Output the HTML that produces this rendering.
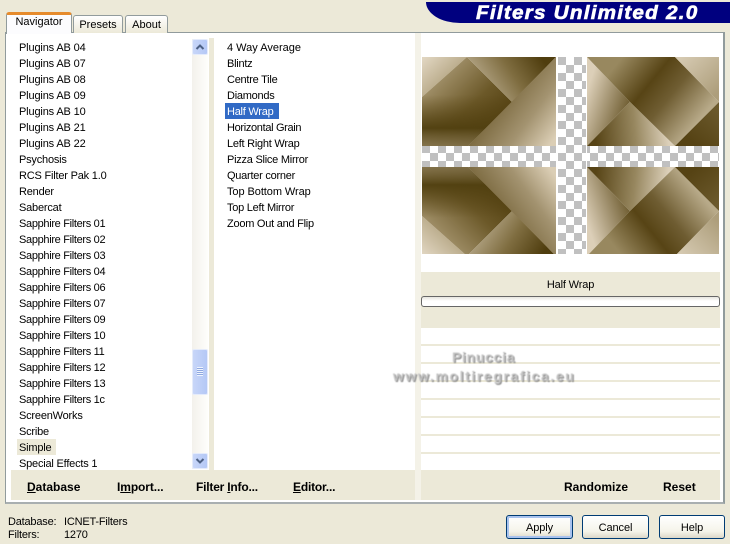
<!DOCTYPE html>
<html><head><meta charset="utf-8"><style>
html,body{margin:0;padding:0}
body{width:730px;height:540px;position:relative;overflow:hidden;background:#ece9d8;font:11px/16px "Liberation Sans",sans-serif;color:#000}
div,span.a{position:absolute;white-space:nowrap;box-sizing:border-box}
.r{left:19px;height:16px;line-height:18px;letter-spacing:-.2px}
.s{letter-spacing:-.32px}
.p{letter-spacing:-.15px}
.m{left:227px;height:16px;line-height:18px;letter-spacing:-.25px}
.b{font-weight:bold;font-size:12px;top:479px;letter-spacing:-.1px}
.btn{top:515px;height:24px;border:1px solid #003c74;border-radius:3px;background:linear-gradient(#fff,#f5f4ea 70%,#dcd8c8);text-align:center;font-size:11px;line-height:24px;letter-spacing:-.1px}
.sb{left:192px;width:16px;height:16px;background:linear-gradient(90deg,#c8d6f8,#b4c8f6);border:1px solid #e4ebfb;border-radius:2px}
.ln{left:421px;width:299px;height:2px;background:#ece9d8}
.st{letter-spacing:-.2px;line-height:18px}
.wm{font:bold 14px/16px "Liberation Sans",sans-serif;color:#c4c4c4;text-shadow:1px 1px 0 #8a8a8a;filter:blur(.45px)}
</style></head><body>
<div style="left:426px;top:2px;width:304px;height:21px;background:#00007f;border-bottom-left-radius:34px 21px"></div>
<div style="left:476px;top:2px;font:italic bold 19px/24px 'Liberation Sans',sans-serif;color:#fff;-webkit-text-stroke:.6px #fff;letter-spacing:1.12px;transform:scaleX(1.09);transform-origin:0 0">Filters Unlimited 2.0</div>

<div style="left:5px;top:32px;width:720px;height:472px;background:#fff;border:1px solid #919b9c;border-right-width:2px;border-bottom-width:2px;border-right-color:#919b9c;border-bottom-color:#a9afb0"></div>

<div style="left:73px;top:15px;width:50px;height:18px;background:linear-gradient(#fff,#ece9d8);border:1px solid #919b9c;border-bottom:0;border-radius:3px 3px 0 0;text-align:center;line-height:18px;font-size:11px">Presets</div>
<div style="left:125px;top:15px;width:43px;height:18px;background:linear-gradient(#fff,#ece9d8);border:1px solid #919b9c;border-bottom:0;border-radius:3px 3px 0 0;text-align:center;line-height:18px;font-size:11px">About</div>
<div style="left:6px;top:12px;width:66px;height:22px;background:#fcfcfe;border:1px solid #919b9c;border-top:3px solid #e68b2c;border-bottom:0;border-radius:3px 3px 0 0;text-align:center;line-height:15px;font-size:11px">Navigator</div>
<div style="left:7px;top:33px;width:65px;height:1px;background:#fcfcfe"></div>

<div style="left:209px;top:38px;width:5px;height:432px;background:#ece9d8"></div>
<div style="left:415px;top:33px;width:6px;height:437px;background:#f4f2e8"></div>
<div style="left:192px;top:39px;width:16px;height:430px;background:linear-gradient(90deg,#f3f1ec,#fefefb)"></div>

<div class="r p" style="top:39px">Plugins AB 04</div>
<div class="r p" style="top:55px">Plugins AB 07</div>
<div class="r p" style="top:71px">Plugins AB 08</div>
<div class="r p" style="top:87px">Plugins AB 09</div>
<div class="r p" style="top:103px">Plugins AB 10</div>
<div class="r p" style="top:119px">Plugins AB 21</div>
<div class="r p" style="top:135px">Plugins AB 22</div>
<div class="r" style="top:151px">Psychosis</div>
<div class="r" style="top:167px">RCS Filter Pak 1.0</div>
<div class="r" style="top:183px">Render</div>
<div class="r" style="top:199px">Sabercat</div>
<div class="r s" style="top:215px">Sapphire Filters 01</div>
<div class="r s" style="top:231px">Sapphire Filters 02</div>
<div class="r s" style="top:247px">Sapphire Filters 03</div>
<div class="r s" style="top:263px">Sapphire Filters 04</div>
<div class="r s" style="top:279px">Sapphire Filters 06</div>
<div class="r s" style="top:295px">Sapphire Filters 07</div>
<div class="r s" style="top:311px">Sapphire Filters 09</div>
<div class="r s" style="top:327px">Sapphire Filters 10</div>
<div class="r s" style="top:343px">Sapphire Filters 11</div>
<div class="r s" style="top:359px">Sapphire Filters 12</div>
<div class="r s" style="top:375px">Sapphire Filters 13</div>
<div class="r s" style="top:391px">Sapphire Filters 1c</div>
<div class="r" style="top:407px">ScreenWorks</div>
<div class="r" style="top:423px">Scribe</div>
<div style="left:17px;top:439px;width:39px;height:16px;background:#ece9d8"></div>
<div class="r" style="top:439px">Simple</div>
<div class="r" style="top:455px">Special Effects 1</div>

<div class="sb" style="top:39px"></div>
<svg style="position:absolute;left:192px;top:39px" width="16" height="16"><path d="M4.5 10 8 6.5 11.500 10" fill="none" stroke="#4d6185" stroke-width="2"/></svg>
<div class="sb" style="top:349px;height:46px"></div>
<div style="left:197px;top:367px;width:6px;height:9px;background:repeating-linear-gradient(#eef4fe 0 1px,#8fa8e0 1px 2px)"></div>
<div class="sb" style="top:453px"></div>
<svg style="position:absolute;left:192px;top:453px" width="16" height="16"><path d="M4.500 6 8 9.500 11.500 6" fill="none" stroke="#4d6185" stroke-width="2"/></svg>

<div class="m" style="top:39px;letter-spacing:0">4 Way Average</div>
<div class="m" style="top:55px">Blintz</div>
<div class="m" style="top:71px">Centre Tile</div>
<div class="m" style="top:87px">Diamonds</div>
<div style="left:225px;top:103px;width:54px;height:16px;background:#316ac5"></div>
<div class="m" style="top:103px;color:#fff">Half Wrap</div>
<div class="m" style="top:119px;letter-spacing:-.33px">Horizontal Grain</div>
<div class="m" style="top:135px">Left Right Wrap</div>
<div class="m" style="top:151px">Pizza Slice Mirror</div>
<div class="m" style="top:167px">Quarter corner</div>
<div class="m" style="top:183px;letter-spacing:-.07px">Top Bottom Wrap</div>
<div class="m" style="top:199px">Top Left Mirror</div>
<div class="m" style="top:215px">Zoom Out and Flip</div>

<svg style="position:absolute;left:422px;top:57px" width="297" height="197" viewBox="422 57 297 197">
<defs>
<pattern id="ck" x="558" y="57" width="16" height="16" patternUnits="userSpaceOnUse"><rect x="0" y="0" width="16" height="16" fill="#fff"/><rect x="0" y="0" width="8" height="8" fill="#c0c0c0"/><rect x="8" y="8" width="8" height="8" fill="#c0c0c0"/></pattern>
<linearGradient id="a1" gradientUnits="userSpaceOnUse" x1="422" y1="60" x2="445" y2="85"><stop offset="0" stop-color="#e0d5c0"/><stop offset="1" stop-color="#b5a684"/></linearGradient>
<linearGradient id="a2" gradientUnits="userSpaceOnUse" x1="445" y1="72" x2="495" y2="122"><stop offset="0" stop-color="#a08f68"/><stop offset=".6" stop-color="#6c5929"/><stop offset="1" stop-color="#564313"/></linearGradient>
<linearGradient id="a2b" gradientUnits="userSpaceOnUse" x1="450" y1="95" x2="450" y2="146"><stop offset="0" stop-color="#5a4716" stop-opacity="0"/><stop offset=".65" stop-color="#514010" stop-opacity=".95"/><stop offset="1" stop-color="#8a7a55" stop-opacity=".75"/></linearGradient>
<linearGradient id="a3" gradientUnits="userSpaceOnUse" x1="480" y1="85" x2="535" y2="48"><stop offset="0" stop-color="#b5a788"/><stop offset=".5" stop-color="#7f6d40"/><stop offset="1" stop-color="#4f3d0e"/></linearGradient>
<linearGradient id="a4" gradientUnits="userSpaceOnUse" x1="495" y1="100" x2="552" y2="142"><stop offset="0" stop-color="#77653a"/><stop offset=".55" stop-color="#a39370"/><stop offset="1" stop-color="#dbceb5"/></linearGradient>
<linearGradient id="b1" gradientUnits="userSpaceOnUse" x1="587" y1="90" x2="630" y2="105"><stop offset="0" stop-color="#dccfb8"/><stop offset="1" stop-color="#6e5c30"/></linearGradient>
<linearGradient id="b2" gradientUnits="userSpaceOnUse" x1="596" y1="142" x2="668" y2="135"><stop offset="0" stop-color="#574416"/><stop offset=".55" stop-color="#97875f"/><stop offset="1" stop-color="#dcd0ba"/></linearGradient>
<linearGradient id="b3" gradientUnits="userSpaceOnUse" x1="620" y1="60" x2="697" y2="123"><stop offset="0" stop-color="#98885f"/><stop offset=".38" stop-color="#574415"/><stop offset=".62" stop-color="#6f5d32"/><stop offset="1" stop-color="#b8aa89"/></linearGradient>
<linearGradient id="b4" gradientUnits="userSpaceOnUse" x1="680" y1="58" x2="715" y2="95"><stop offset="0" stop-color="#d6cab2"/><stop offset="1" stop-color="#ad9e7b"/></linearGradient>
<linearGradient id="b5" gradientUnits="userSpaceOnUse" x1="690" y1="140" x2="716" y2="108"><stop offset="0" stop-color="#564314"/><stop offset="1" stop-color="#6b592c"/></linearGradient>
<g id="q">
<polygon points="422,57 467,57 422,97" fill="url(#a1)"/>
<polygon points="467,57 512,102 468,146 422,146 422,97" fill="url(#a2)"/>
<polygon points="467,57 512,102 468,146 422,146 422,97" fill="url(#a2b)"/>
<polygon points="467,57 556,57 512,102" fill="url(#a3)"/>
<polygon points="556,57 556,146 468,146" fill="url(#a4)"/>
<polygon points="587,57 630,102 587,146" fill="url(#b1)"/>
<polygon points="630,102 587,146 675,146" fill="url(#b2)"/>
<polygon points="587,57 675,57 719,102 675,146 630,102" fill="url(#b3)"/>
<polygon points="675,57 719,57 719,102" fill="url(#b4)"/>
<polygon points="719,102 719,146 675,146" fill="url(#b5)"/>
</g>
</defs>
<rect x="422" y="57" width="297" height="197" fill="#fff"/>
<use href="#q"/>
<use href="#q" transform="matrix(1 0 0 -1 0 313)"/>
<rect x="422" y="146" width="297" height="21" fill="url(#ck)"/>
<rect x="556" y="57" width="31" height="197" fill="#fff"/>
<rect x="558" y="57" width="28" height="197" fill="url(#ck)"/>
</svg>

<div style="left:421px;top:272px;width:299px;height:56px;background:#ece9d8"></div>
<div style="left:421px;top:277px;width:299px;text-align:center;font-size:11px;letter-spacing:-.15px">Half Wrap</div>
<div style="left:421px;top:296px;width:299px;height:11px;background:linear-gradient(#e6e5de,#fff 45%);border:1px solid #666;border-radius:3px"></div>
<div class="ln" style="top:344px"></div>
<div class="ln" style="top:362px"></div>
<div class="ln" style="top:380px"></div>
<div class="ln" style="top:398px"></div>
<div class="ln" style="top:416px"></div>
<div class="ln" style="top:434px"></div>
<div class="ln" style="top:452px"></div>

<div class="wm" style="left:452px;top:349px;letter-spacing:.7px">Pinuccia</div>
<div class="wm" style="left:393px;top:368px;letter-spacing:1.6px">www.moltiregrafica.eu</div>

<div style="left:11px;top:470px;width:709px;height:30px;background:#ece9d8"></div>
<div style="left:415px;top:470px;width:6px;height:30px;background:#f4f2e8"></div>
<div class="b" style="left:27px;letter-spacing:0"><u>D</u>atabase</div>
<div class="b" style="left:117px">I<u>m</u>port...</div>
<div class="b" style="left:196px;letter-spacing:-.2px">Filter <u>I</u>nfo...</div>
<div class="b" style="left:293px;letter-spacing:-.2px"><u>E</u>ditor...</div>
<div class="b" style="left:564px;letter-spacing:0">Randomize</div>
<div class="b" style="left:663px;letter-spacing:0">Reset</div>

<div class="st" style="left:8px;top:513px">Database:</div>
<div class="st" style="left:64px;top:513px">ICNET-Filters</div>
<div class="st" style="left:8px;top:526px">Filters:</div>
<div class="st" style="left:64px;top:526px">1270</div>

<div class="btn" style="left:506px;width:67px;box-shadow:inset 0 0 0 2px #a9c3ee">Apply</div>
<div class="btn" style="left:582px;width:67px">Cancel</div>
<div class="btn" style="left:659px;width:66px">Help</div>
</body></html>
